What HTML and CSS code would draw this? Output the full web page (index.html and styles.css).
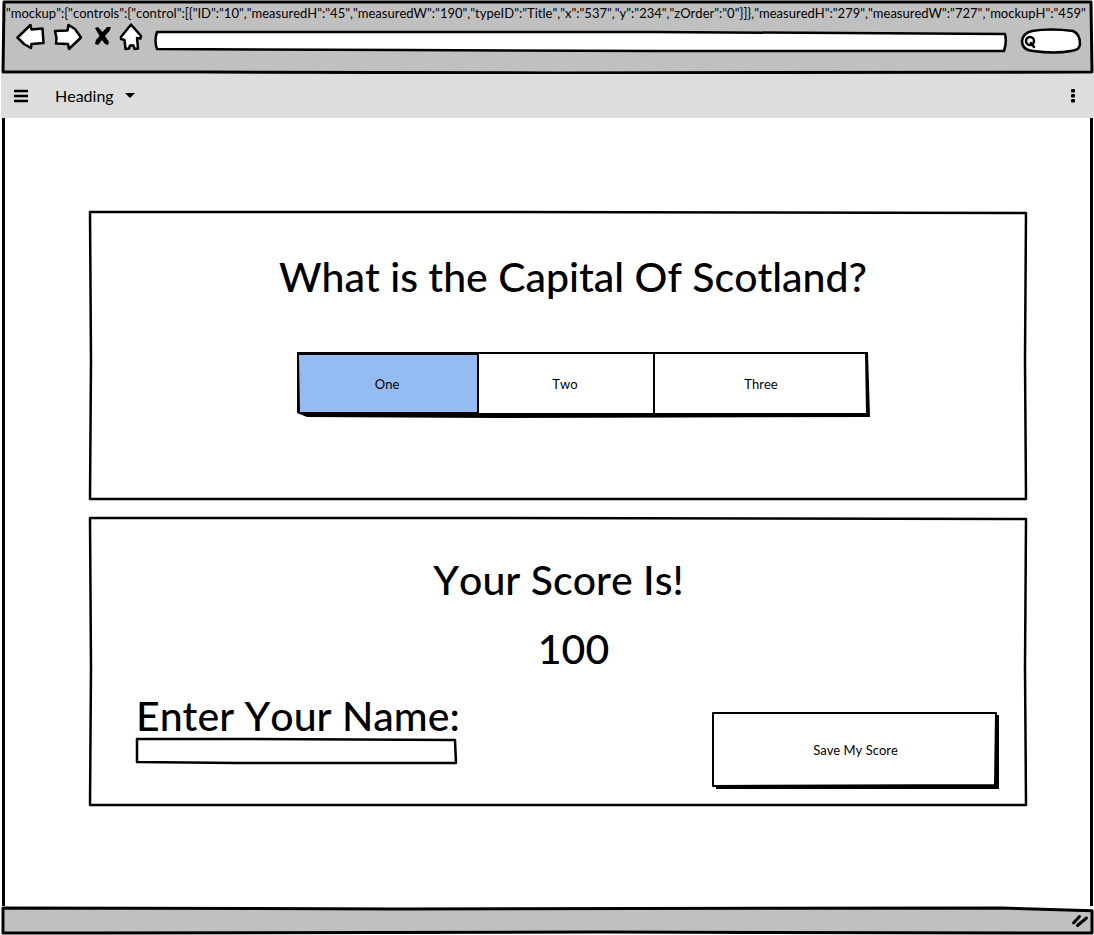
FILE: index.html
```html
<!DOCTYPE html>
<html lang="en">
<head>
<meta charset="utf-8">
<meta name="viewport" content="width=device-width, initial-scale=1">
<title>Quiz</title>
<link rel="stylesheet" href="styles.css">
</head>
<body>
<div class="window">
  <header class="chrome">
    <svg class="sketch" viewBox="0 0 1094 74" preserveAspectRatio="none" aria-hidden="true">
      <path class="line line-bold" d="M3 72 L4 2 L500 2 L1091 2 L1092 72 L560 73 L200 72 Z"/>
    </svg>
    <p class="chrome-title">{"mockup":{"controls":{"control":[{"ID":"10","measuredH":"45","measuredW":"190","typeID":"Title","x":"537","y":"234","zOrder":"0"}]},"measuredH":"279","measuredW":"727","mockupH":"459"</p>
    <div class="chrome-row">
      <button class="icon-button" type="button" aria-label="Back">
        <svg width="30" height="28" viewBox="16 23 30 28"><path class="icon-outline" d="M17.500 37.500 L30.500 25 L31.500 29.500 L42.500 28.500 L43.500 43 L31.500 44 L31 48 L24 44 Z"/></svg>
      </button>
      <button class="icon-button" type="button" aria-label="Forward">
        <svg width="30" height="28" viewBox="53 23 30 28"><path class="icon-outline" d="M55 31 L67.500 30.500 L68.500 25 L75 29 L81 37.500 L69 49 L68 44 L56 43.500 L56.500 38 Z"/></svg>
      </button>
      <button class="icon-button icon-stop" type="button" aria-label="Stop">
        <svg width="18" height="28" viewBox="94 23 18 28"><path d="M95 28 L98 27 L102.500 32 L107 27 L111 27 L109.500 31 L105 36 L109 42 L108 45 L105 44 L102 40 L98 45 L95 44 L96 40 L99.500 36 Z"/></svg>
      </button>
      <button class="icon-button" type="button" aria-label="Home">
        <svg width="24" height="28" viewBox="119 23 24 28"><path class="icon-outline" d="M131 24.500 L141 36 L140.500 38.500 L137 38 L138 48.500 L134.500 49 L133.500 45.500 L130 45.500 L129 48.500 L125.500 49 L124.500 40 L121 39 L121 37 Z"/></svg>
      </button>
      <div class="address">
        <svg class="sketch" viewBox="0 0 853 22" preserveAspectRatio="none" aria-hidden="true">
          <path class="line fill" d="M3 1 L500 1 L852 3 Q854 11 851 20 L500 20 L250 19 L3 18 Q0 10 3 1 Z"/>
        </svg>
        <input class="field" type="text" aria-label="Address">
      </div>
      <div class="search">
        <svg class="sketch" viewBox="0 0 62 26" preserveAspectRatio="none" aria-hidden="true">
          <path class="line fill" d="M12 3 Q30 0 53 3 Q60 6 60 16 Q60 22 51 23 Q35 26 13 23 Q2 22 2 13 Q3 5 12 3 Z"/>
          <ellipse class="line" cx="10" cy="13" rx="4" ry="4"/>
          <path class="line" d="M11 15 L14 19"/>
        </svg>
        <input class="field" type="search" aria-label="Search">
      </div>
    </div>
  </header>

  <nav class="toolbar" aria-label="Main">
    <button class="icon-button" type="button" aria-label="Menu">
      <svg width="14" height="14" viewBox="0 0 14 14"><path class="icon-bars" d="M0 2 H14 M0 7 H14 M0 12 H14"/></svg>
    </button>
    <button class="toolbar-heading" type="button">Heading
      <svg width="10" height="6" viewBox="0 0 10 6" aria-hidden="true"><path d="M0 1 H10 L5 6 Z"/></svg>
    </button>
    <button class="icon-button toolbar-more" type="button" aria-label="More">
      <svg width="4" height="14" viewBox="0 0 4 14"><rect width="4" height="3.500" rx="1"/><rect y="5" width="4" height="3.500" rx="1"/><rect y="10" width="4" height="3.500" rx="1"/></svg>
    </button>
  </nav>

  <main class="page">
    <section class="panel panel-question">
      <svg class="sketch" viewBox="0 0 939 289" preserveAspectRatio="none" aria-hidden="true">
        <path class="line" d="M1 1 L400 1 L938 2 L937 150 L938 288 L500 288 L1 288 L2 150 Z"/>
      </svg>
      <h1 class="title">What is the Capital Of Scotland?</h1>
      <div class="answers" role="group" aria-label="Answers">
        <svg class="sketch" viewBox="0 0 572 65" preserveAspectRatio="none" aria-hidden="true">
          <path class="shade" d="M0 0 L571 0 L573 65 L200 66 L10 65 L0 61 Z"/>
          <path class="selected" d="M2 3 L180 3 L180 60 L3 60 Z"/>
          <path class="fill-only" d="M182 2 L356 2 L356 61 L182 61 Z M358 2 L568 2 L569 61 L358 61 Z"/>
        </svg>
        <button class="answer" type="button" aria-pressed="true">One</button>
        <button class="answer" type="button" aria-pressed="false">Two</button>
        <button class="answer" type="button" aria-pressed="false">Three</button>
      </div>
    </section>

    <section class="panel panel-score">
      <svg class="sketch" viewBox="0 0 939 289" preserveAspectRatio="none" aria-hidden="true">
        <path class="line" d="M1 1 L400 1 L938 2 L937 150 L938 287 L500 287 L1 287 L2 150 Z"/>
      </svg>
      <h2 class="title">Your Score Is!</h2>
      <p class="title score">100</p>
      <form class="save-form">
        <div class="name-group">
          <label class="title" for="name">Enter Your Name:</label>
          <div class="name-box">
            <svg class="sketch" viewBox="0 0 321 27" preserveAspectRatio="none" aria-hidden="true">
              <path class="line" d="M1 1 L100 1 L319 2 L320 25 L250 25 L100 25 L1 24 Z"/>
            </svg>
            <input class="field" id="name" type="text">
          </div>
        </div>
        <button class="save" type="button">
          <svg class="sketch" viewBox="0 0 287 77" preserveAspectRatio="none" aria-hidden="true">
            <path class="shade" d="M4 3 L287 3 L287 77 L4 77 Z"/>
            <path class="line-thin fill" d="M1 1 L284 1 L283 73 L1 74 Z"/>
          </svg>
          <span class="save-label">Save My Score</span>
        </button>
      </form>
    </section>
  </main>

  <footer class="status">
    <svg class="sketch" viewBox="0 0 1094 30" preserveAspectRatio="none" aria-hidden="true">
      <path class="line line-bold chrome-fill" d="M3 2 L400 3 L1000 2 L1092 5 L1092 28 L600 27 L100 28 L3 28 Z"/>
    </svg>
    <svg class="grip" width="18" height="14" viewBox="0 0 18 14" aria-hidden="true"><path class="icon-grip" d="M2.500 9 L8.500 2.500 M6.500 11.500 L15.500 4"/></svg>
  </footer>
</div>
</body>
</html>
```

FILE: styles.css
```css
* { box-sizing: border-box; }

body {
  margin: 0;
  background: #fff;
  color: #000;
  font-family: Lato, "Noto Sans", sans-serif;
  font-size: 13px;
  font-kerning: none;
}

h1, h2, p { margin: 0; }

button, input {
  margin: 0;
  padding: 0;
  border: 0;
  background: none;
  color: inherit;
  font: inherit;
  font-kerning: none;
}

svg { display: block; overflow: visible; }

.window {
  display: flex;
  flex-direction: column;
  min-height: 100vh;
  overflow: hidden;
}

.sketch {
  position: absolute;
  inset: 0;
  width: 100%;
  height: 100%;
  pointer-events: none;
}

.line, .line-thin {
  fill: none;
  stroke: #000;
  stroke-width: 2.5;
  stroke-linejoin: round;
  stroke-linecap: round;
  vector-effect: non-scaling-stroke;
}
.line-thin { stroke-width: 2; }
.line-bold { stroke-width: 3; }
.fill, .fill-only { fill: #fff; }
.selected { fill: #94bbf2; }
.chrome-fill { fill: #c0c0c0; }

.chrome {
  position: relative;
  height: 74px;
  padding: 4px 0 4px 2px;
  background: linear-gradient(#c0c0c0, #c0c0c0) 3px 2px / calc(100% - 5px) 71px no-repeat;
}
.chrome-title {
  position: relative;
  height: 19px;
  overflow: hidden;
  line-height: 19px;
  white-space: nowrap;
}
.chrome-row {
  display: flex;
  align-items: flex-start;
  padding: 0 12px 0 14px;
}
.icon-button { display: flex; margin-right: 7px; }
.icon-stop { margin: 0 7px 0 4px; }
.icon-outline {
  fill: #fff;
  stroke: #000;
  stroke-width: 2.5;
  stroke-linejoin: round;
}
.icon-bars { stroke: #000; stroke-width: 2.5; }
.icon-grip { stroke: #000; stroke-width: 3; stroke-linecap: round; }

.address {
  position: relative;
  flex: 1;
  height: 22px;
  margin: 8px 14px 0 4px;
}
.search {
  position: relative;
  width: 62px;
  height: 26px;
  margin-top: 5px;
}
.field {
  position: relative;
  display: block;
  width: 100%;
  height: 100%;
  padding: 0 8px;
}
.search .field { padding-left: 20px; }

.toolbar {
  position: relative;
  display: flex;
  align-items: center;
  height: 44px;
  margin-left: 1px;
  padding: 0 19px 0 13px;
  background: #ddd;
}
.toolbar-heading {
  display: flex;
  align-items: center;
  gap: 11px;
  margin-left: 20px;
  padding-bottom: 2px;
  font-size: 16px;
}
.toolbar-more { margin: 0 0 0 auto; }

.page {
  flex: 1;
  display: flex;
  flex-direction: column;
  gap: 17px;
  margin: 0 1px 0 2px;
  padding: 93px 63px 93px 84px;
  border: solid #000;
  border-width: 0 3px;
}
.panel {
  position: relative;
  min-height: 289px;
}
.title {
  font-size: 41px;
  font-weight: 500;
  line-height: 48px;
  text-align: center;
}
.panel-question { padding: 42px 0 0 50px; }
.panel-question .title { padding-right: 20px; }
.answers {
  position: relative;
  display: grid;
  grid-template-columns: 180fr 176fr 216fr;
  width: 572px;
  height: 65px;
  margin: 51px auto 0;
}
.answer { position: relative; padding-bottom: 2px; }

.panel-score { padding: 39px 28px 18px 47px; }
.panel-score h2 { padding-right: 18px; }
.score { margin-top: 21px; padding-left: 12px; }
.save-form {
  display: flex;
  justify-content: space-between;
  align-items: flex-end;
  margin-top: 20px;
}
.name-group { padding-bottom: 24px; }
.name-group .title { display: block; text-align: left; line-height: 45px; }
.name-box {
  position: relative;
  width: 321px;
  height: 27px;
}
.save {
  position: relative;
  width: 287px;
  height: 77px;
  padding-bottom: 2px;
}
.save-label { position: relative; }

.status {
  position: relative;
  display: flex;
  justify-content: flex-end;
  align-items: center;
  height: 29px;
  padding-right: 5px;
}
.grip { position: relative; }
```
